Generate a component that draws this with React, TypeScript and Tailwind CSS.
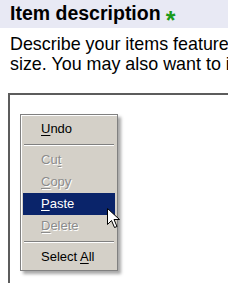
import React from 'react';

const MenuItem: React.FC<{ label: string; keyIndex: number; disabled?: boolean; active?: boolean }> = ({
  label,
  keyIndex,
  disabled,
  active,
}) => {
  const before = label.slice(0, keyIndex);
  const key = label.slice(keyIndex, keyIndex + 1);
  const after = label.slice(keyIndex + 1);
  return (
    <div
      className={`h-[22px] flex items-center pl-[18px] ${
        active ? 'bg-[#0a246a] text-white' : disabled ? 'text-[#8c8c8c] [text-shadow:1px_1px_0_#ffffff]' : 'text-black'
      }`}
    >
      <span>
        {before}
        <span className="underline underline-offset-2">{key}</span>
        {after}
      </span>
    </div>
  );
};

const Separator = () => (
  <div className="h-[9px] flex items-center px-[1px]">
    <div className="w-full h-[2px] border-t border-[#808080] border-b-white border-b" />
  </div>
);

export default function App() {
  return (
    <div className="w-[228px] h-[283px] overflow-hidden bg-white relative font-['Liberation_Sans',Arial,sans-serif]">
      {/* Header */}
      <div className="h-[28px] w-full bg-[#e8e9f4] pl-[10px] flex items-center whitespace-nowrap">
        <span className="text-[19.5px] font-bold text-black">Item description</span>
        <span className="ml-[5px] text-[25px] font-bold text-[#1a9a1a] leading-none mt-[12px]">*</span>
      </div>

      {/* Description */}
      <div className="w-[360px] mt-[6px] pl-[10px] text-[17.9px] leading-[20px] text-black whitespace-nowrap">
        <div>Describe your items feature and condition</div>
        <div>size. You may also want to include details</div>
      </div>

      {/* Textarea */}
      <div className="mt-[19px] ml-[8px] h-[200px] w-[300px] border-t-2 border-l-2 border-[#5c5c5c] pt-[19px] pl-[10px]">
        <div className="relative w-[98px] bg-[#d4d0c8] border border-[#808080] shadow-[inset_1px_1px_0_#ffffff,3px_3px_3px_rgba(0,0,0,0.35)] pt-[3px] pb-[2px] text-[13px] px-[2px]">
          <MenuItem label="Undo" keyIndex={0} />
          <Separator />
          <MenuItem label="Cut" keyIndex={2} disabled />
          <MenuItem label="Copy" keyIndex={0} disabled />
          <MenuItem label="Paste" keyIndex={0} active />
          <MenuItem label="Delete" keyIndex={0} disabled />
          <Separator />
          <MenuItem label="Select All" keyIndex={7} />

          {/* Cursor */}
          <svg
            className="absolute left-[86px] top-[93px]"
            width="14"
            height="22"
            viewBox="0 0 14 22"
          >
            <path
              d="M0.5 0.5 L0.5 16.5 L4.5 12.5 L7.5 19.5 L10 18.5 L7 11.5 L12.5 11.5 Z"
              fill="#ffffff"
              stroke="#000000"
              strokeWidth="1"
              strokeLinejoin="miter"
            />
          </svg>
        </div>
      </div>
    </div>
  );
}
